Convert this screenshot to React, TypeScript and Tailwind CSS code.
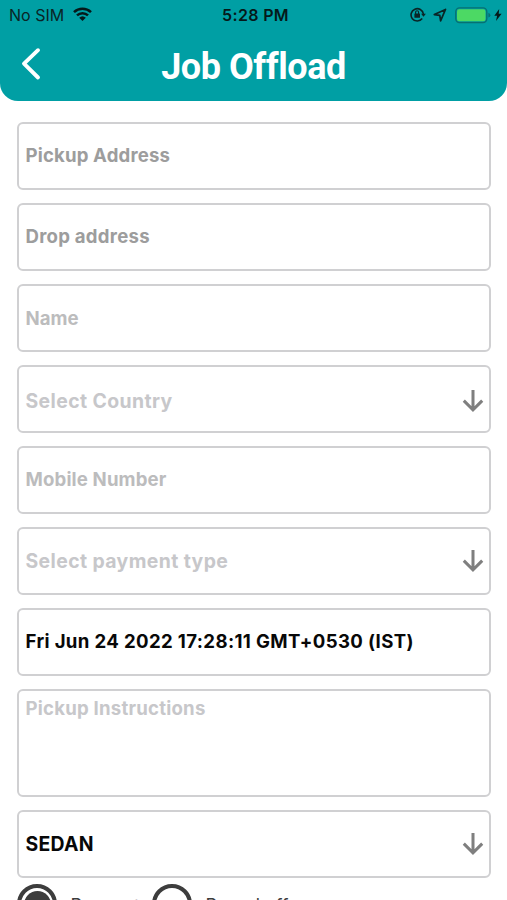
import React from "react";

type FieldProps = {
  label: string;
  text: string;
  arrow?: boolean;
  size?: string;
  align?: string;
  arrowClass?: string;
};

function DownArrow({ className = "" }: { className?: string }) {
  return (
    <svg className={className} width="22" height="24" viewBox="0 0 22 24" fill="none" stroke="#7f7f7f" strokeWidth="3">
      <path d="M11 1v20M1.8 11.6l9.2 9.2 9.2-9.2" />
    </svg>
  );
}

function Field({ label, text, arrow = false, size = "h-[68px]", align = "items-center", arrowClass = "" }: FieldProps) {
  return (
    <div className={`flex w-full justify-between rounded-[6px] border-2 border-[#d0d0d2] pr-[5px] pl-[6.5px] ${align} ${size}`}>
      <span className={`leading-6 font-bold whitespace-nowrap ${text}`}>{label}</span>
      {arrow && <DownArrow className={arrowClass} />}
    </div>
  );
}

function StatusBar() {
  return (
    <div className="grid h-[30px] grid-cols-3 items-center pr-[5px] pl-[9px] text-[#0a2526]">
      <div className="flex items-center gap-[9px]">
        <span className="text-[16px] leading-5">No SIM</span>
        <svg className="mb-[2px]" width="19" height="14" viewBox="0 0 19 14" fill="none" stroke="#05191a" strokeWidth="2.5">
          <path d="M1 5.1a12.3 12.3 0 0 1 17 0M4 8.4a7.9 7.9 0 0 1 11 0" />
          <path d="M6.2 10.7a4.8 4.8 0 0 1 6.6 0L9.5 14Z" fill="#05191a" stroke="none" />
        </svg>
      </div>
      <span className="text-center text-[16px] leading-5 font-semibold tracking-[0.35px] text-[#05191a]">5:28 PM</span>
      <div className="flex items-center justify-end">
        <svg className="mb-[2px]" width="16" height="15" viewBox="0 0 16 15" fill="none" stroke="#0a2526" strokeWidth="1.6">
          <path d="M12.2 11.6A6.2 6.2 0 1 1 13.4 7" />
          <path d="M11.1 6.8h4.8l-2.4 3Z" fill="#0a2526" stroke="none" />
          <rect x="4.4" y="6.4" width="5.6" height="4.4" rx=".5" fill="#0a2526" stroke="none" />
          <path d="M5.6 7V5.2a1.5 1.5 0 0 1 3 0V7" strokeWidth="1.1" />
        </svg>
        <svg className="ml-[7px]" width="14" height="14" viewBox="0 0 14 14" fill="none" stroke="#0a2526" strokeWidth="1.7" strokeLinejoin="round">
          <path d="M12.5 1.4 1.3 6.6l5.5.7.8 5.6Z" />
        </svg>
        <svg className="ml-[8px]" width="36" height="17" viewBox="0 0 36 17">
          <rect x=".8" y=".9" width="31" height="14.6" rx="3.8" fill="none" stroke="#077072" strokeWidth="1.4" />
          <rect x="2" y="2.2" width="28.5" height="12" rx="2.3" fill="#4cd964" />
          <path d="M33.4 5.8q2 .6 2 2.4t-2 2.4Z" fill="#077072" />
        </svg>
        <svg className="mb-px ml-[3px]" width="8" height="12" viewBox="0 0 8 12" fill="#05191a">
          <path d="M5.2 0 .3 6.8h2.8L2 12l5.6-7.2H4.7Z" />
        </svg>
      </div>
    </div>
  );
}

function RadioOption({ label, selected = false, width = "" }: { label: string; selected?: boolean; width?: string }) {
  return (
    <div className={`flex shrink-0 items-start gap-[13.5px] ${width}`}>
      <div className="flex size-[40px] shrink-0 items-center justify-center rounded-full border-[4px] border-[#3d3d3d]">
        {selected && <div className="size-[27px] shrink-0 rounded-full bg-[#3d3d3d]" />}
      </div>
      <span className="mt-[10px] text-[18px] leading-6 whitespace-nowrap text-[#3d3d3d]">{label}</span>
    </div>
  );
}

export default function App() {
  return (
    <main className="h-[900px] w-[507px] overflow-hidden bg-white font-['Inter',sans-serif]">
      <header className="h-[101px] rounded-b-[18px] bg-[#009fa4]">
        <StatusBar />
        <div className="grid h-[71px] grid-cols-[60px_1fr_60px] items-start">
          <svg className="mt-[17px] ml-[21px]" width="20" height="34" viewBox="0 0 20 34" fill="none" stroke="white" strokeWidth="3.9" strokeLinecap="round" strokeLinejoin="round">
            <path d="M17 3.2 3 16.7 17 30.5" />
          </svg>
          <h1 className="mt-[15px] text-center font-['Roboto',sans-serif] text-[36px] leading-[44px] font-bold tracking-[-0.45px] text-white [font-variant-ligatures:none]">Job Offload</h1>
        </div>
      </header>
      <form className="flex flex-col gap-[13px] pt-[21px] pr-[16px] pl-[17px]">
        <Field label="Pickup Address" text="mb-[2px] text-[18.6px] tracking-[0.15px] text-[#9d9d9d]" />
        <Field label="Drop address" text="mb-[2px] text-[18.6px] tracking-[0.25px] text-[#9d9d9d]" />
        <Field label="Name" text="text-[18.6px] text-[#bcbcbd]" />
        <Field label="Select Country" text="mt-[4px] text-[19.4px] tracking-[0.4px] text-[#c7c7ca]" arrow arrowClass="mt-[3px]" />
        <Field label="Mobile Number" text="mb-[2px] text-[18.6px] tracking-[0.15px] text-[#bcbcbd]" />
        <Field label="Select payment type" text="text-[19.4px] tracking-[0.4px] text-[#c7c7ca]" arrow />
        <Field label="Fri Jun 24 2022 17:28:11 GMT+0530 (IST)" text="mb-[3px] text-[18.6px] tracking-[0.36px] text-[#080808]" />
        <Field label="Pickup Instructions" text="mt-[5px] text-[18.6px] tracking-[0.22px] text-[#c7c7ca]" size="h-[108px]" align="items-start" />
        <Field label="SEDAN" text="text-[19.4px] tracking-[0.3px] text-[#080808]" arrow />
      </form>
      <div className="mt-[6px] flex pl-[17px]">
        <RadioOption label="Request" selected width="w-[135px]" />
        <RadioOption label="Round off" />
      </div>
    </main>
  );
}
